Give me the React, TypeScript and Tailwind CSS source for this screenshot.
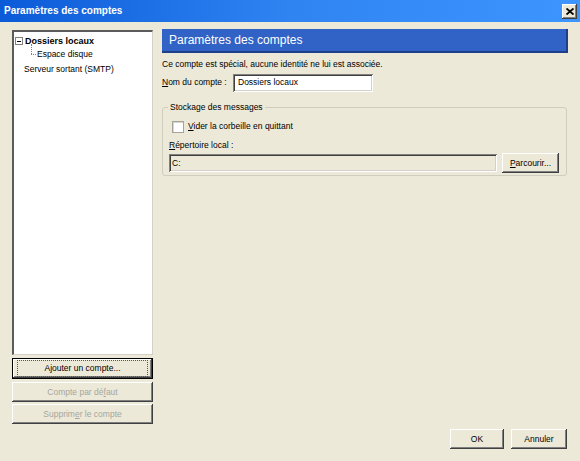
import React from "react";

const raised =
  "shadow-[inset_-1px_-1px_0_#404040,inset_1px_1px_0_#ffffff,inset_-2px_-2px_0_#808080,inset_2px_2px_0_#ece9d8]";
const sunken =
  "shadow-[inset_1px_1px_0_#808080,inset_-1px_-1px_0_#ffffff,inset_2px_2px_0_#404040,inset_-2px_-2px_0_#d4d0c8]";

function U({ children }: { children: React.ReactNode }) {
  return <span className="underline underline-offset-1">{children}</span>;
}

function Button({
  children,
  className = "",
  disabled = false,
}: {
  children: React.ReactNode;
  className?: string;
  disabled?: boolean;
}) {
  return (
    <button
      type="button"
      className={`flex items-center justify-center bg-[#ece9d8] ${raised} ${
        disabled ? "text-[#a7a69d]" : "text-black"
      } ${className}`}
    >
      {children}
    </button>
  );
}

export default function App() {
  return (
    <div
      className="flex h-[461px] w-[580px] flex-col overflow-hidden bg-[#ece9d8] text-[8.5px] leading-none text-black"
      style={{ fontFamily: '"Liberation Sans", Arial, sans-serif' }}
    >
      {/* title bar */}
      <div className="flex h-[22px] shrink-0 items-center justify-between bg-gradient-to-r from-[#0b5ad8] via-[#2f84f2] to-[#3d95ff] pl-[4px] pr-[3px]">
        <span className="text-[10px] font-bold text-white">Paramètres des comptes</span>
        <div
          className={`flex h-[15px] w-[15px] items-center justify-center bg-[#ece9d8] ${raised}`}
        >
          <svg width="8" height="7" viewBox="0 0 8 7">
            <path d="M0.5 0.5 L7.5 6.5 M7.5 0.5 L0.5 6.5" stroke="#000" strokeWidth="1.8" />
          </svg>
        </div>
      </div>

      <div className="flex flex-1 gap-[9px] px-[12px] pb-[12px] pt-[7px]">
        {/* left column */}
        <div className="mb-[25px] mt-[1px] flex w-[141px] flex-col">
          <div className="flex-1 border-l-2 border-t-2 border-r border-b border-l-[#5b5b5b] border-t-[#5b5b5b] border-r-[#d4d0c8] border-b-[#d4d0c8] bg-white pt-[2px]">
            <div className="relative flex h-[14px] items-center pl-[1px]">
              <div className="flex h-[8px] w-[8px] items-center justify-center border border-[#808080] bg-white">
                <div className="h-px w-[4px] bg-black" />
              </div>
              <span className="ml-[2px] text-[9px] font-bold">Dossiers locaux</span>
            </div>
            <div className="relative flex h-[13px] items-center pl-[23px]">
              <div className="absolute left-[17px] top-[-4px] h-[10px] border-l border-dotted border-[#808080]" />
              <div className="absolute left-[17px] top-[6px] w-[5px] border-t border-dotted border-[#808080]" />
              <span>Espace disque</span>
            </div>
            <div className="flex h-[16px] items-center pl-[10px]">Serveur sortant (SMTP)</div>
          </div>
          <div className="mt-[3px] flex h-[21px] items-center justify-center border border-black">
            <div className={`flex h-full w-full items-center justify-center bg-[#ece9d8] ${raised}`}>
              <span className="border border-dotted border-[#555] px-[26px] py-[3px]">
                A<U>j</U>outer un compte...
              </span>
            </div>
          </div>
          <Button className="mt-[3px] h-[20px] w-full" disabled>
            Compte par dé<U>f</U>aut
          </Button>
          <Button className="mt-[2px] h-[20px] w-full" disabled>
            Supprim<U>e</U>r le compte
          </Button>
        </div>

        {/* right column */}
        <div className="flex w-[406px] flex-col">
          <div className="flex h-[24px] items-center border-b-2 border-r-2 border-b-[#1e3f8a] border-r-[#1e3f8a] bg-[#3163c6] pl-[7px] text-[12px] text-white">
            Paramètres des comptes
          </div>
          <div className="mt-[7px]">Ce compte est spécial, aucune identité ne lui est associée.</div>
          <div className="mt-[5px] flex items-center">
            <span className="w-[71px]">
              <U>N</U>om du compte :
            </span>
            <div className={`flex h-[18px] w-[140px] items-center bg-white pl-[5px] ${sunken}`}>
              Dossiers locaux
            </div>
          </div>

          <div className="relative mt-[15px] h-[69px] w-[405px] rounded-[3px] border border-[#cfcdbf]">
            <span className="absolute left-[5px] top-[-5px] bg-[#ece9d8] px-[2px]">
              Stockage des messages
            </span>
            <div className="mt-[13px] flex items-center pl-[9px]">
              <div className="h-[12px] w-[12px] border border-[#a5a39a] bg-white shadow-[inset_1px_1px_0_#d8d6cc]" />
              <span className="ml-[4px]">
                <U>V</U>ider la corbeille en quittant
              </span>
            </div>
            <div className="mt-[8px] pl-[6px]">
              <U>R</U>épertoire local :
            </div>
            <div className="mt-[4px] flex items-center pl-[6px]">
              <div className={`flex h-[18px] w-[328px] items-center bg-[#ece9d8] pl-[3px] ${sunken}`}>C:</div>
              <Button className="ml-[5px] h-[20px] w-[57px]">
                <U>P</U>arcourir...
              </Button>
            </div>
          </div>

          <div className="mt-auto flex justify-end gap-[7px] pr-[1px]">
            <Button className="h-[20px] w-[54px]">OK</Button>
            <Button className="h-[20px] w-[56px]">Annuler</Button>
          </div>
        </div>
      </div>
    </div>
  );
}
